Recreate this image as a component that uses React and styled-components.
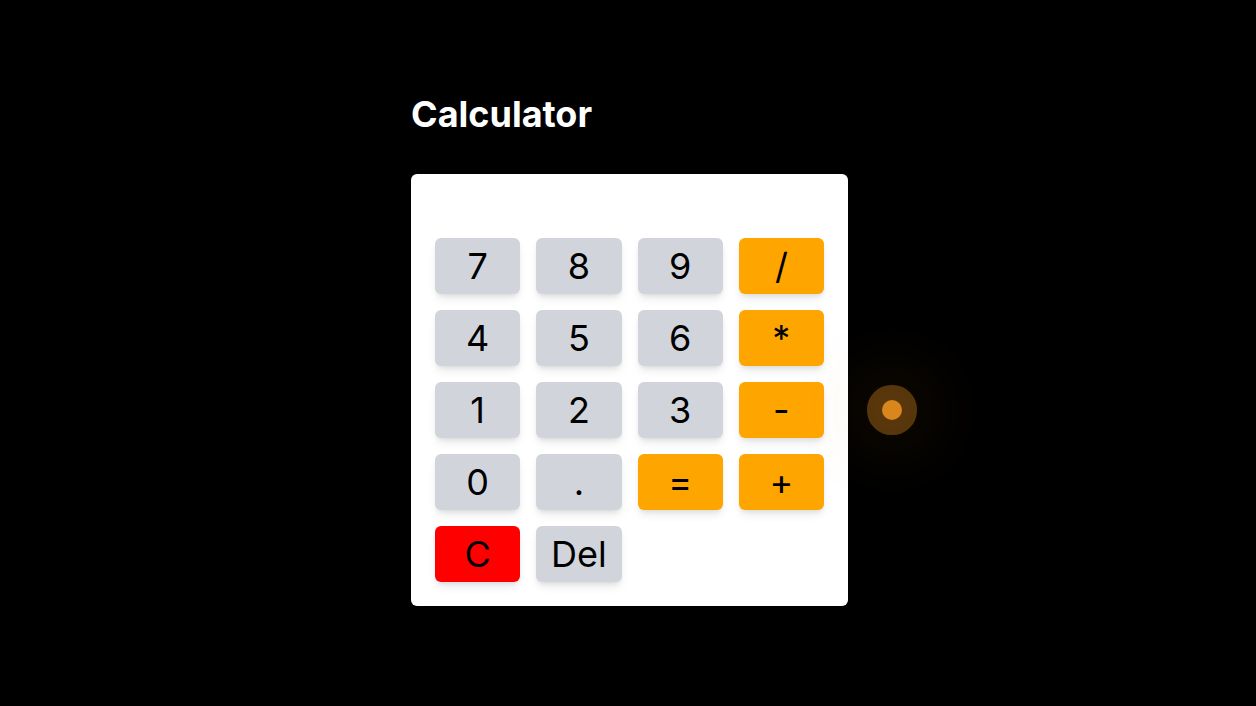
import React, { useState } from "react";
import styled, { createGlobalStyle } from "styled-components";

const GlobalStyle = createGlobalStyle`
  body {
    margin: 0;
    background: #000;
    font-family: Inter, "Noto Sans", sans-serif;
  }
`;

const Page = styled.main`
  min-height: 100vh;
  display: flex;
  flex-direction: column;
  align-items: center;
  justify-content: center;
`;

const Wrapper = styled.section`
  width: 437px;
  margin: 0 0 6px 3px;
`;

const Title = styled.h1`
  color: #fff;
  font-size: 36px;
  font-weight: 700;
  margin: 0 0 40px;
  line-height: 40px;
`;

const Card = styled.div`
  background: #fff;
  border-radius: 6px;
  padding: 24px;
`;

const Display = styled.div`
  height: 24px;
  margin-bottom: 16px;
  text-align: right;
  font-size: 24px;
`;

const Keys = styled.div`
  display: grid;
  grid-template-columns: repeat(4, 1fr);
  gap: 16px;
`;

const colors = {
  num: "#d1d5db",
  op: "#ffa500",
  clear: "#ff0000",
};

const Key = styled.button`
  height: 56px;
  border: none;
  border-radius: 6px;
  background: ${(p) => colors[p.$kind]};
  color: #000;
  font-family: Inter, "Noto Sans", sans-serif;
  font-size: 36px;
  line-height: 1;
  padding: 0;
  box-shadow: 0 6px 10px -2px rgba(0, 0, 0, 0.1), 0 3px 5px -2px rgba(0, 0, 0, 0.08);
  cursor: pointer;
`;

const Glow = styled.div`
  position: absolute;
  left: 882px;
  top: 400px;
  width: 20px;
  height: 20px;
  border-radius: 50%;
  background: #d9861c;
  box-shadow: 0 0 0 15px rgba(217, 134, 28, 0.38),
    0 0 60px 40px rgba(217, 134, 28, 0.06);
  pointer-events: none;
`;

const keys = [
  ["7", "num"], ["8", "num"], ["9", "num"], ["/", "op"],
  ["4", "num"], ["5", "num"], ["6", "num"], ["*", "op"],
  ["1", "num"], ["2", "num"], ["3", "num"], ["-", "op"],
  ["0", "num"], [".", "num"], ["=", "op"], ["+", "op"],
  ["C", "clear"], ["Del", "num"],
];

const App = () => {
  const [value, setValue] = useState("");

  const press = (k) => {
    if (k === "C") return setValue("");
    if (k === "Del") return setValue(value.slice(0, -1));
    if (k === "=") {
      try {
        // eslint-disable-next-line no-new-func
        setValue(String(Function(`return (${value})`)()));
      } catch (e) {
        setValue("");
      }
      return;
    }
    setValue(value + k);
  };

  return (
    <Page>
      <GlobalStyle />
      <Wrapper>
        <Title>Calculator</Title>
        <Card>
          <Display>{value}</Display>
          <Keys>
            {keys.map(([k, kind]) => (
              <Key key={k} $kind={kind} onClick={() => press(k)}>
                {k}
              </Key>
            ))}
          </Keys>
        </Card>
      </Wrapper>
      <Glow />
    </Page>
  );
};

export default App;
